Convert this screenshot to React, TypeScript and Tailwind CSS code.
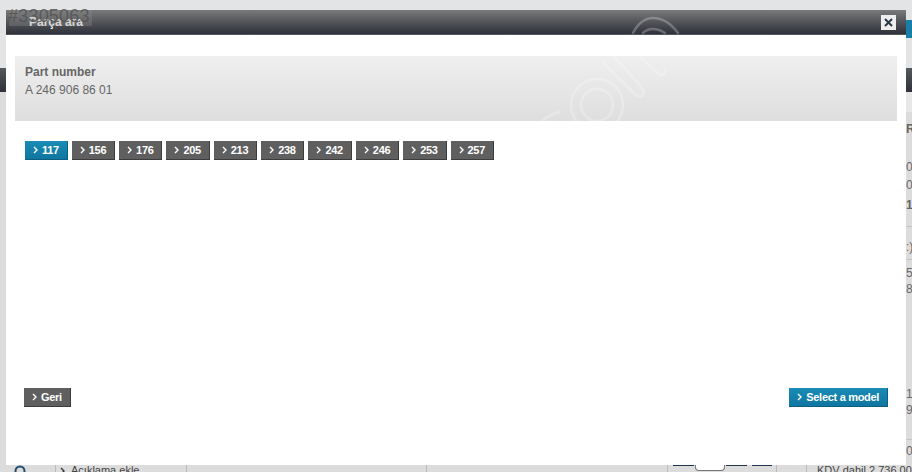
const models = ["117", "156", "176", "205", "213", "238", "242", "246", "253", "257"];

function Chevron() {
  return (
    <svg width="5" height="8" viewBox="0 0 5 8" className="shrink-0">
      <path d="M1 1l3 3-3 3" fill="none" stroke="#fff" strokeWidth="1.4" />
    </svg>
  );
}

function Btn({ label, blue }: { label: string; blue?: boolean }) {
  return (
    <button
      className={`flex h-[19px] items-center gap-[4px] border-b border-r pl-[8px] pr-[7.9px] text-[11px] font-bold tracking-[-0.3px] text-white ${
        blue
          ? "border-[#0d5f80] bg-gradient-to-b from-[#1a8cb5] to-[#0f76a0]"
          : "border-[#3c3c3c] bg-[#5f5f5f]"
      }`}
    >
      <Chevron />
      {label}
    </button>
  );
}

function Digit({ v, className }: { v: string; className?: string }) {
  return <div className={`h-[16px] leading-[16px] ${className ?? ""}`}>{v}</div>;
}

export default function App() {
  return (
    <div className="relative flex h-[472px] w-[912px] flex-col overflow-hidden bg-[#dcdcdc] font-['Liberation_Sans',Arial,sans-serif] text-[#555]">
      {/* page behind the dialog */}
      <div className="flex h-[68px] shrink-0 items-start justify-end bg-[#e3e4e6] pt-[20px]">
        <div className="h-[18px] w-[6px] bg-[#1a7fa8]" />
      </div>
      <div className="h-[24px] shrink-0 bg-gradient-to-b from-[#55585c] to-[#2f323a]" />
      <div className="flex min-h-0 flex-1 justify-end">
        <div className="flex w-[6px] flex-col overflow-hidden text-[12px] text-[#666]">
          <div className="h-[20px] shrink-0 bg-[#e8e8e8]" />
          <Digit v="R" className="mt-[9px] font-bold" />
          <Digit v="0" className="mt-[22px]" />
          <Digit v="0" className="mt-[2px]" />
          <Digit v="1" className="mt-[4px] font-bold" />
          <div className="h-[14px] shrink-0 border-b border-[#c4c4c4]" />
          <Digit v=":)" className="mt-[12px]" />
          <div className="h-[5px] shrink-0 border-b border-[#c4c4c4]" />
          <Digit v="5" className="mt-[5px]" />
          <Digit v="8" />
          <Digit v="1" className="mt-[89px]" />
          <Digit v="9" />
          <div className="h-[22px] shrink-0 border-b border-[#c4c4c4]" />
          <Digit v="0" className="mt-[3px]" />
        </div>
      </div>
      <div className="flex h-[7px] shrink-0 items-start overflow-hidden text-[11px] leading-none text-[#444]">
        <div className="h-full w-[56px] shrink-0 border-r border-[#bbb] pl-[13px]">
          <svg width="14" height="14" viewBox="0 0 14 14">
            <circle cx="7" cy="6" r="4.5" fill="none" stroke="#1f4e6e" strokeWidth="2" />
          </svg>
        </div>
        <div className="flex h-full w-[131px] shrink-0 items-start gap-[6px] border-r border-[#bbb] pl-[4px] whitespace-nowrap">
          <svg width="5" height="8" viewBox="0 0 5 8" className="mt-[2px] shrink-0">
            <path d="M1 1l3 3-3 3" fill="none" stroke="#333" strokeWidth="1.4" />
          </svg>
          Açıklama ekle
        </div>
        <div className="h-full w-[240px] shrink-0 border-r border-[#bbb]" />
        <div className="h-full w-[241px] shrink-0 border-r border-[#bbb]" />
        <div className="flex h-full w-[109px] shrink-0 items-start border-r border-[#bbb] pl-[5px]">
          <div className="h-px w-[21px] bg-[#1f3550]" />
          <div className="mx-px h-[6px] w-[30px] rounded-b-sm border-b border-x border-[#777] bg-white" />
          <div className="h-px w-[21px] bg-[#1f3550]" />
          <div className="ml-[5px] h-px w-[20px] bg-[#1f3550]" />
        </div>
        <div className="h-full w-[30px] shrink-0 border-r border-[#bbb]" />
        <span className="whitespace-nowrap pl-[10px]">KDV dahil 2 736 00</span>
      </div>

      {/* dialog */}
      <div className="absolute left-[6px] top-[10px] flex h-[455px] w-[900px] flex-col bg-white">
        <div className="flex h-[25px] shrink-0 items-center justify-between border-b border-[#55565a] bg-gradient-to-b from-[#7a7a7a] to-[#2f323a] pl-[23px] pr-[10px]">
          <span className="text-[12px] font-bold text-white">Parça ara</span>
          <div className="flex h-[15px] w-[15px] items-center justify-center bg-[#eeeeee]">
            <svg width="9" height="9" viewBox="0 0 9 9">
              <path d="M1 1l7 7M8 1l-7 7" stroke="#2c3648" strokeWidth="2" />
            </svg>
          </div>
        </div>

        <div className="mx-[9px] mt-[21px] flex h-[65px] flex-col bg-gradient-to-b from-[#efefef] to-[#dedede] px-[10px] pt-[7px] text-[12px] leading-[18px] text-[#666]">
          <span className="font-bold">Part number</span>
          <span>A 246 906 86 01</span>
        </div>

        <div className="mx-[19px] mt-[20px] flex gap-[4px]">
          {models.map((m, i) => (
            <Btn key={m} label={m} blue={i === 0} />
          ))}
        </div>

        <div className="mx-[18px] mt-[228px] flex justify-between">
          <Btn label="Geri" />
          <Btn label="Select a model" blue />
        </div>
      </div>

      {/* faint watermark over the dialog */}
      <svg width="912" height="130" viewBox="0 0 912 130" className="pointer-events-none absolute left-0 top-0 opacity-25">
        <g fill="none" stroke="#fff" strokeWidth="2.5" strokeLinecap="round">
          <circle cx="597" cy="105" r="26" />
          <circle cx="597" cy="105" r="16" />
          <path d="M603 63l33 32q6 4 8-3l-2-4-30-34" />
          <path d="M640 57l20 18q5 1 6-6" />
          <path d="M543 120q8-6 17-8" />
          <path d="M633 33q8-15 20-15 14 0 25 15" />
          <path d="M643 33q4-4 10-4 6 0 12 4" />
        </g>
      </svg>

      {/* image id stamp */}
      <div className="absolute left-[9px] top-[10px] h-[16px] w-[83px] bg-[#8a8a8a]/35" />
      <div className="absolute left-[8px] top-[6px] text-[18px] leading-[20px] tracking-[0.2px] text-[#555]/90">
        #3305063
      </div>
    </div>
  );
}
